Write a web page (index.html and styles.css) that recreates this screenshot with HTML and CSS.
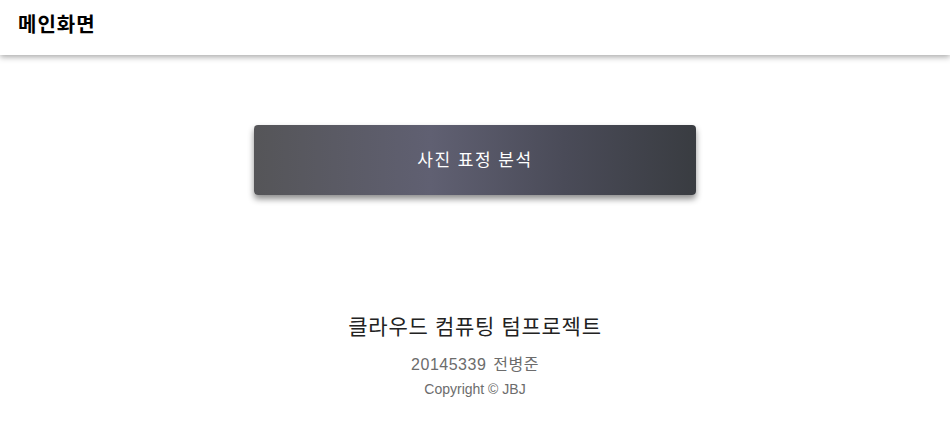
FILE: index.html
```html
<!DOCTYPE html>
<html lang="ko">
<head>
<meta charset="utf-8">
<title>메인화면</title>
<link rel="stylesheet" href="styles.css">
</head>
<body>
<header class="topbar">
  <h1 class="title">메인화면</h1>
</header>
<main class="main">
  <button class="action">사진 표정 분석</button>
</main>
<footer class="footer">
  <p class="project">클라우드 컴퓨팅 텀프로젝트</p>
  <p class="author">20145339 전병준</p>
  <p class="copy">Copyright © JBJ</p>
</footer>
</body>
</html>
```
FILE: styles.css
```css
html, body {
  margin: 0;
  padding: 0;
  background: #fff;
  font-family: "Liberation Sans", "Noto Sans CJK KR", sans-serif;
}
.topbar {
  height: 55px;
  display: flex;
  align-items: center;
  padding: 0 18px;
  background: #fff;
  box-shadow: 0 2px 6px rgba(0, 0, 0, 0.35);
  position: relative;
}
.title {
  margin: 0;
  font-size: 20px;
  letter-spacing: 1px;
  font-weight: bold;
  color: #000;
  padding-bottom: 8px;
}
.main {
  display: flex;
  justify-content: center;
  padding-top: 70px;
}
.action {
  width: 442px;
  height: 70px;
  border: none;
  border-radius: 4px;
  background: linear-gradient(to right, #555558 0%, #606072 40%, #4a4b58 70%, #393c41 100%);
  color: #fff;
  font-family: "Liberation Sans", "Noto Sans CJK KR", sans-serif;
  font-size: 17px;
  letter-spacing: 1.5px;
  box-shadow: 0 4px 6px rgba(0, 0, 0, 0.45);
  padding: 0 0 4px;
}
.footer {
  text-align: center;
  padding-top: 119px;
}
.footer p {
  margin: 0;
}
.project {
  font-size: 21px;
  letter-spacing: 0.7px;
  color: #222;
  line-height: 26px;
}
.author {
  font-size: 16px;
  letter-spacing: 0.5px;
  word-spacing: 2px;
  color: #6c6c6c;
  margin-top: 14px !important;
  line-height: 22px;
}
.copy {
  font-size: 14px;
  color: #6c6c6c;
  margin-top: 3px !important;
  line-height: 20px;
}
```
